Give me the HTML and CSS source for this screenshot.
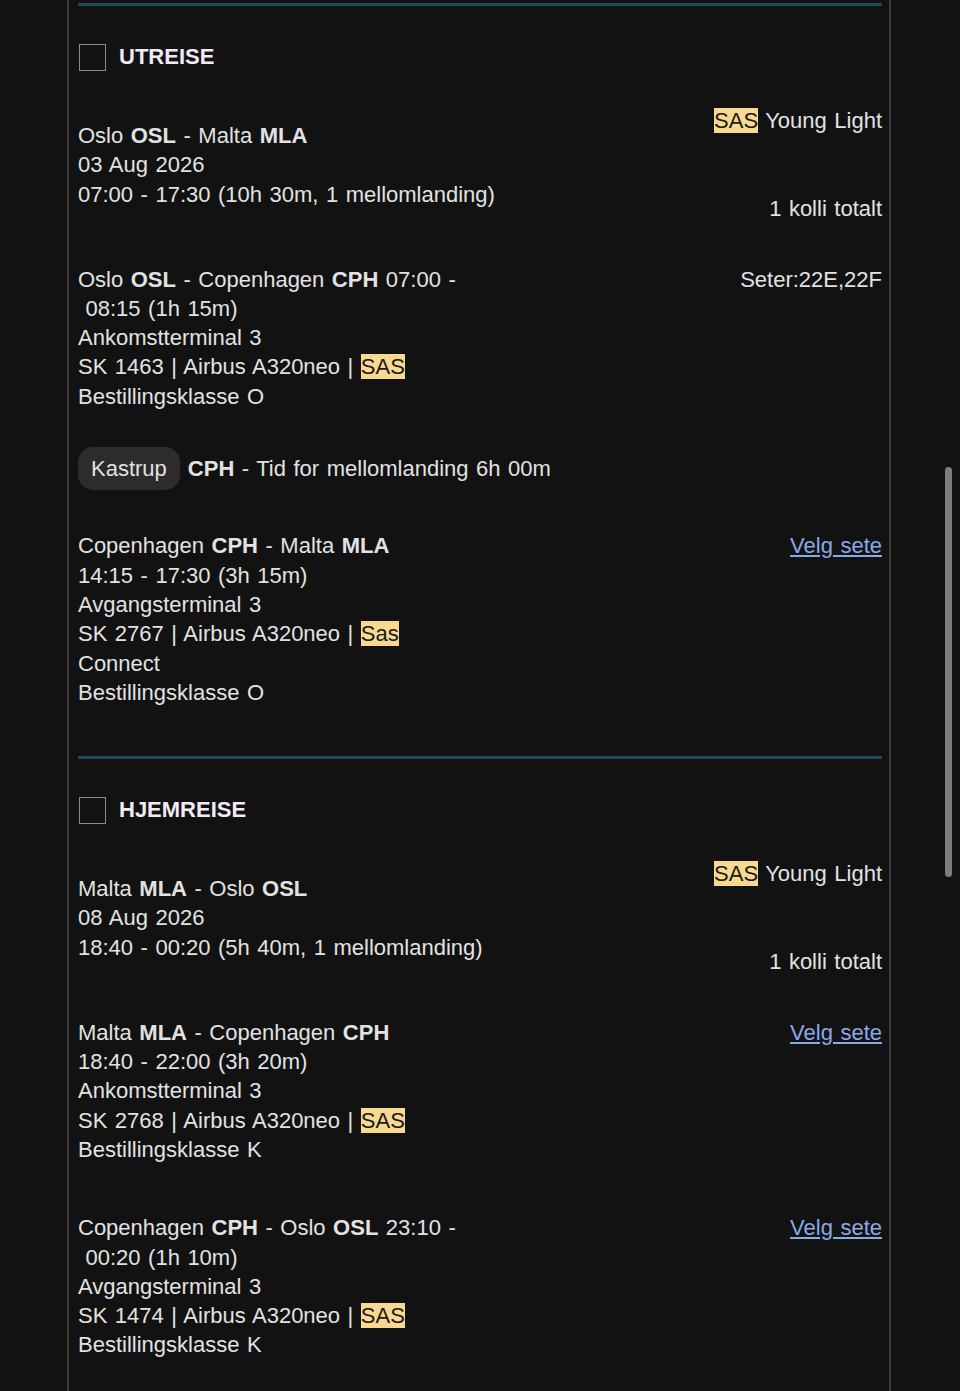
FILE: index.html
```html
<!DOCTYPE html>
<html>
<head>
    <title>Reiseplan</title>
    <meta charset="UTF-8">
    <link rel="stylesheet" href="styles.css">
</head>
<body>
    <div class="trip">
        <!-- Utreise -->
        <div class="bound">
            <hr class="bound-rule">
            <div class="bound-head">
                <span class="check"></span>
                <span class="bound-title">UTREISE</span>
            </div>
            <div class="summary">
                <div class="summary-main">
                    <div>Oslo <b>OSL</b> - Malta <b>MLA</b></div>
                    <div>03 Aug 2026</div>
                    <div>07:00 - 17:30 (10h 30m, 1 mellomlanding)</div>
                </div>
                <div class="summary-side">
                    <div><mark>SAS</mark> Young Light</div>
                    <div class="bags">1 kolli totalt</div>
                </div>
            </div>
            <div class="leg">
                <div class="leg-main">
                    <div>Oslo <b>OSL</b> - Copenhagen <b>CPH</b> 07:00 -<br>&nbsp;08:15 (1h 15m)</div>
                    <div>Ankomstterminal 3</div>
                    <div>SK 1463 | Airbus A320neo | <mark>SAS</mark></div>
                    <div>Bestillingsklasse O</div>
                </div>
                <div class="leg-side">Seter:22E,22F</div>
            </div>
            <div class="stop">
                <span class="pill">Kastrup</span>
                <span><b>CPH</b> - Tid for mellomlanding 6h 00m</span>
            </div>
            <div class="leg">
                <div class="leg-main">
                    <div>Copenhagen <b>CPH</b> - Malta <b>MLA</b></div>
                    <div>14:15 - 17:30 (3h 15m)</div>
                    <div>Avgangsterminal 3</div>
                    <div>SK 2767 | Airbus A320neo | <mark>Sas</mark><br>Connect</div>
                    <div>Bestillingsklasse O</div>
                </div>
                <div class="leg-side"><a href="#">Velg sete</a></div>
            </div>
        </div>

        <!-- Hjemreise -->
        <div class="bound">
            <hr class="bound-rule">
            <div class="bound-head">
                <span class="check"></span>
                <span class="bound-title">HJEMREISE</span>
            </div>
            <div class="summary">
                <div class="summary-main">
                    <div>Malta <b>MLA</b> - Oslo <b>OSL</b></div>
                    <div>08 Aug 2026</div>
                    <div>18:40 - 00:20 (5h 40m, 1 mellomlanding)</div>
                </div>
                <div class="summary-side">
                    <div><mark>SAS</mark> Young Light</div>
                    <div class="bags">1 kolli totalt</div>
                </div>
            </div>
            <div class="leg">
                <div class="leg-main">
                    <div>Malta <b>MLA</b> - Copenhagen <b>CPH</b></div>
                    <div>18:40 - 22:00 (3h 20m)</div>
                    <div>Ankomstterminal 3</div>
                    <div>SK 2768 | Airbus A320neo | <mark>SAS</mark></div>
                    <div>Bestillingsklasse K</div>
                </div>
                <div class="leg-side"><a href="#">Velg sete</a></div>
            </div>
            <div class="leg">
                <div class="leg-main">
                    <div>Copenhagen <b>CPH</b> - Oslo <b>OSL</b> 23:10 -<br>&nbsp;00:20 (1h 10m)</div>
                    <div>Avgangsterminal 3</div>
                    <div>SK 1474 | Airbus A320neo | <mark>SAS</mark></div>
                    <div>Bestillingsklasse K</div>
                </div>
                <div class="leg-side"><a href="#">Velg sete</a></div>
            </div>
        </div>
    </div>

    <div class="scroll-thumb"></div>
</body>
</html>
```
FILE: styles.css
```css
html, body { margin: 0; padding: 0; }
body {
    background: #121212;
    color: #e2e2e2;
    font-family: "Liberation Sans", Arial, sans-serif;
    font-size: 22px;
    word-spacing: 1.4px;
    line-height: 29.3px;
}
b { font-weight: 700; }
mark { background: #f9d98f; color: #1a1a1a; }
a { color: #8aa9e6; text-decoration: underline; }

.trip {
    box-sizing: border-box;
    width: 824px;
    min-height: 1391px;
    margin-left: 67px;
    padding: 3px 7px 0 9px;
    border-left: 2px solid #3b3b3b;
    border-right: 2px solid #3b3b3b;
}

.bound { padding-bottom: 49px; }
.bound-rule { height: 3px; margin: 0; border: none; background: #20495e; }
.bound-head { display: flex; align-items: center; margin-top: 38px; height: 27px; }
.check {
    box-sizing: border-box;
    width: 27px;
    height: 27px;
    margin-left: 1px;
    border: 1.5px solid #8a8a8a;
}
.bound-title { margin: 0 0 2px 13px; font-weight: 700; color: #f1e9f3; line-height: 24px; }

.summary { display: flex; justify-content: space-between; margin-top: 35px; }
.summary-main { margin-top: 15px; }
.summary-side { text-align: right; }
.summary-side .bags { margin-top: 59px; }

.leg { display: flex; justify-content: space-between; margin-top: 41px; }
.leg + .leg { margin-top: 49px; }
.leg-main { width: 400px; }
.leg-side { text-align: right; }

.stop { display: flex; align-items: center; margin-top: 36px; }
.stop + .leg { margin-top: 41px; }
.pill {
    padding: 7px 13px;
    margin-right: 8px;
    border-radius: 15px;
    background: #2c2c2c;
}

.scroll-thumb {
    position: fixed;
    top: 467px;
    right: 8px;
    width: 7px;
    height: 410px;
    border-radius: 4px;
    background: #7e7e7e;
}
```
